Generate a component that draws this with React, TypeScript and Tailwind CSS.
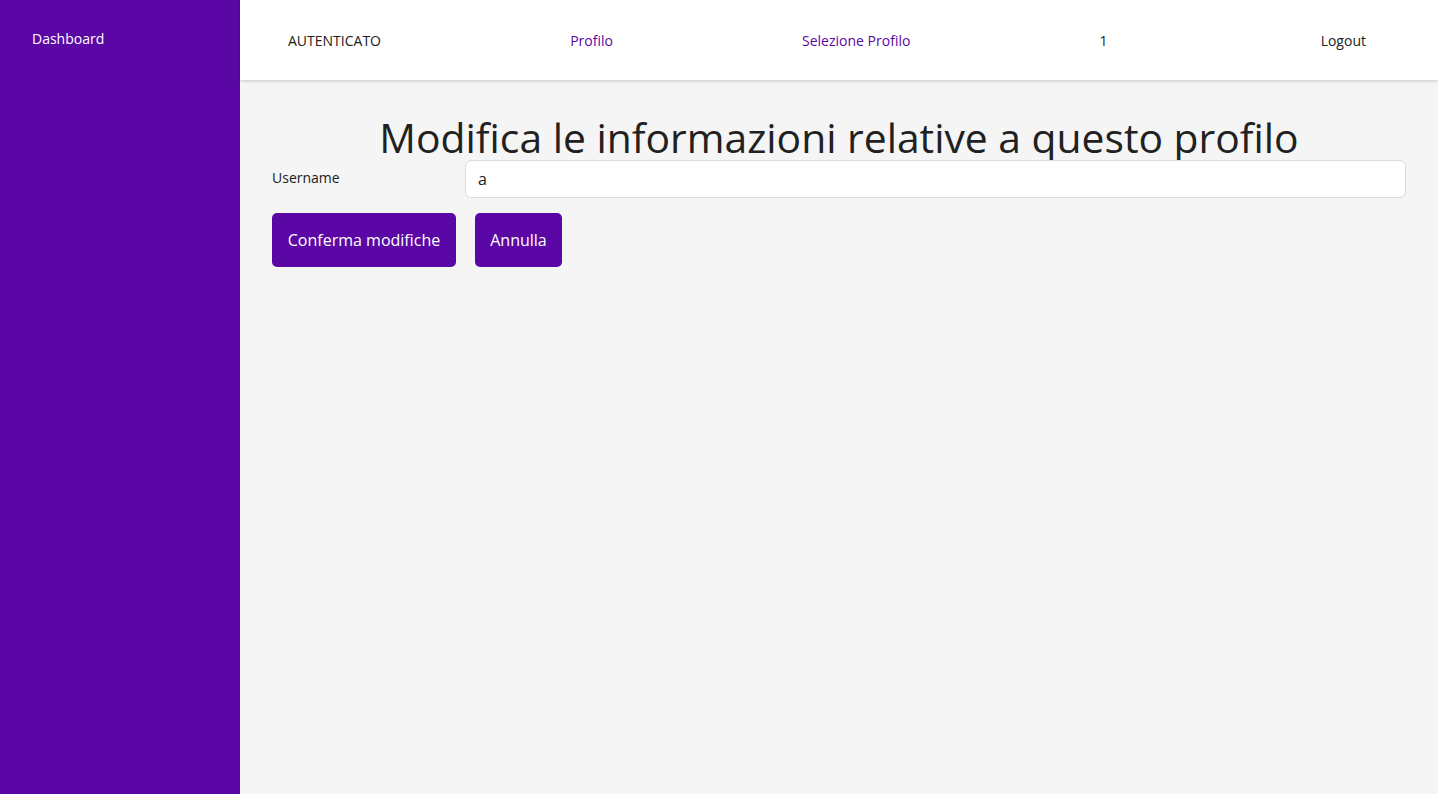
export default function App() {
  return (
    <div className="flex h-[794px] w-full bg-[#f5f5f5] text-[#212121]" style={{ fontFamily: '"Open Sans", sans-serif' }}>
      <aside className="w-[240px] shrink-0 bg-[#5a07a6] px-8 pt-[29px]">
        <div className="text-sm text-white">Dashboard</div>
      </aside>
      <div className="flex min-w-0 flex-1 flex-col">
        <header className="flex h-20 shrink-0 items-center justify-between bg-white px-12 pt-[2px] text-sm shadow-[0_1px_3px_rgba(0,0,0,0.2)]">
          <span className="text-[#212121]">AUTENTICATO</span>
          <span className="text-[#5a07a6]">Profilo</span>
          <span className="text-[#5a07a6]">Selezione Profilo</span>
          <span>1</span>
          <span className="px-6">Logout</span>
        </header>
        <main className="px-8 pt-[31px]">
          <h1 className="text-center text-[40.8px] leading-[52px]">Modifica le informazioni relative a questo profilo</h1>
          <div className="-mt-[3px] flex items-center">
            <label className="w-[193px] shrink-0 pb-[2px] text-sm">Username</label>
            <div className="flex h-[38px] flex-1 items-center rounded-md border border-[#dcdcdc] bg-white px-3 text-base">a</div>
          </div>
          <div className="mt-[15px] flex gap-[19px]">
            <button className="h-[54px] w-[184px] rounded-[5px] bg-[#5a07a6] text-base text-white">Conferma modifiche</button>
            <button className="h-[54px] w-[87px] rounded-[5px] bg-[#5a07a6] text-base text-white">Annulla</button>
          </div>
        </main>
      </div>
    </div>
  );
}
